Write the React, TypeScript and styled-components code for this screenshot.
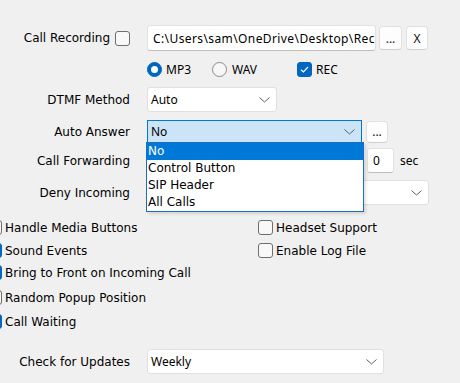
import React from 'react';
import styled, { createGlobalStyle } from 'styled-components';

const Global = createGlobalStyle`
  html, body { margin: 0; padding: 0; background: #f0f0f0; }
  body { font-family: "DejaVu Sans", sans-serif; }
`;

const Page = styled.div`
  width: 460px;
  height: 383px;
  overflow: hidden;
  box-sizing: border-box;
  padding-top: 25px;
  background: #f0f0f0;
  color: #000;
  display: flex;
  flex-direction: column;
`;

const Row = styled.div<{ $h: number; $mt?: number }>`
  display: grid;
  grid-template-columns: 130px 1fr;
  column-gap: 17px;
  height: ${(p) => p.$h}px;
  margin-top: ${(p) => p.$mt ?? 0}px;
  align-items: center;
  flex-shrink: 0;
`;

const Label = styled.div`
  display: flex;
  justify-content: flex-end;
  align-items: center;
  gap: 5px;
  font-family: "DejaVu Sans", sans-serif;
  font-size: 12px;
  white-space: nowrap;
`;

const Controls = styled.div`
  display: flex;
  align-items: center;
  height: 100%;
  position: relative;
  font-family: "Noto Sans", sans-serif;
  font-size: 12px;
`;

const TextBox = styled.div<{ $w: number; $ml?: number; $spacing?: number }>`
  width: ${(p) => p.$w}px;
  height: 100%;
  margin-left: ${(p) => p.$ml ?? 0}px;
  box-sizing: border-box;
  background: #fff;
  border: 1px solid #e2e2e2;
  border-bottom-color: #bdbdbd;
  border-radius: 3px;
  display: flex;
  align-items: center;
  padding-left: 5px;
  overflow: hidden;
  white-space: nowrap;
  font-family: "Noto Sans", sans-serif;
  font-size: 12px;
  letter-spacing: ${(p) => p.$spacing ?? 0}px;
  flex-shrink: 0;
`;

const SmallButton = styled.div<{ $w: number; $h: number; $ml: number }>`
  width: ${(p) => p.$w}px;
  height: ${(p) => p.$h}px;
  margin-left: ${(p) => p.$ml}px;
  box-sizing: border-box;
  background: #fdfdfd;
  border: 1px solid #e0e0e0;
  border-bottom-color: #cfcfcf;
  border-radius: 4px;
  display: flex;
  align-items: center;
  justify-content: center;
  font-family: "Noto Sans", sans-serif;
  font-size: 12px;
  color: #111;
  flex-shrink: 0;
`;

const Option = styled.div<{ $w?: number }>`
  display: flex;
  align-items: center;
  gap: 4px;
  ${(p) => (p.$w ? `width: ${p.$w}px;` : '')}
  flex-shrink: 0;
`;

const RadioDot = styled.span<{ $on?: boolean }>`
  width: 15px;
  height: 15px;
  box-sizing: border-box;
  border-radius: 50%;
  flex-shrink: 0;
  display: flex;
  align-items: center;
  justify-content: center;
  background: ${(p) => (p.$on ? '#0067c0' : '#f7f7f7')};
  border: 1px solid ${(p) => (p.$on ? '#0067c0' : '#8a8a8a')};
  &::after {
    content: '';
    display: ${(p) => (p.$on ? 'block' : 'none')};
    width: 7px;
    height: 7px;
    border-radius: 50%;
    background: #fff;
  }
`;

const OptionText = styled.span<{ $ml?: number }>`
  margin-left: ${(p) => p.$ml ?? 0}px;
`;

const CheckBox = styled.span<{ $on?: boolean }>`
  width: 15px;
  height: 15px;
  box-sizing: border-box;
  border-radius: 3px;
  flex-shrink: 0;
  display: flex;
  align-items: center;
  justify-content: center;
  background: ${(p) => (p.$on ? '#0067c0' : '#f8f8f8')};
  border: 1px solid ${(p) => (p.$on ? '#0067c0' : '#6e6e6e')};
`;

const Check: React.FC<{ on?: boolean }> = ({ on }) => (
  <CheckBox $on={on}>
    {on && (
      <svg width="11" height="11" viewBox="0 0 11 11">
        <polyline points="2,5.8 4.4,8 9,3" fill="none" stroke="#fff" strokeWidth="1.2" />
      </svg>
    )}
  </CheckBox>
);

const SelectBox = styled.div<{ $w: number; $active?: boolean }>`
  width: ${(p) => p.$w}px;
  height: 100%;
  box-sizing: border-box;
  background: ${(p) => (p.$active ? '#cce4f7' : '#fff')};
  border: 1px solid ${(p) => (p.$active ? '#0078d7' : '#e0e0e0')};
  border-radius: ${(p) => (p.$active ? '0' : '3px')};
  display: flex;
  align-items: center;
  justify-content: space-between;
  padding: 0 6px 0 3px;
  font-family: "Noto Sans", sans-serif;
  font-size: 12px;
  position: relative;
  flex-shrink: 0;
`;

const Chevron = () => (
  <svg width="11" height="6" viewBox="0 0 11 6">
    <polyline points="0.5,0.5 5.5,5 10.5,0.5" fill="none" stroke="#606060" strokeWidth="1" />
  </svg>
);

const Select: React.FC<{ w: number; value?: string; active?: boolean; children?: React.ReactNode }> = ({
  w,
  value,
  active,
  children,
}) => (
  <SelectBox $w={w} $active={active}>
    <span>{value}</span>
    <Chevron />
    {children}
  </SelectBox>
);

const ListBox = styled.div`
  position: absolute;
  top: 100%;
  left: -2px;
  width: 218px;
  box-sizing: border-box;
  border: 1px solid #1a6fc4;
  background: #fff;
  z-index: 10;
  box-shadow: 2px 2px 3px rgba(0, 0, 0, 0.12);
  font-family: "DejaVu Sans", sans-serif;
  font-size: 12px;
`;

const ListItem = styled.div<{ $sel?: boolean }>`
  height: 17px;
  line-height: 17px;
  padding-left: 1px;
  background: ${(p) => (p.$sel ? '#0078d7' : 'transparent')};
  color: ${(p) => (p.$sel ? '#fff' : '#000')};
  white-space: nowrap;
`;

const Unit = styled.span`
  margin-left: 6px;
`;

const CheckArea = styled.div`
  display: grid;
  grid-template-columns: 271px 1fr;
  margin-left: -13px;
  margin-top: 15px;
  flex-shrink: 0;
`;

const CheckColumn = styled.div`
  display: flex;
  flex-direction: column;
`;

const CheckItem = styled.div<{ $mt?: number }>`
  display: flex;
  align-items: center;
  gap: 3px;
  height: 15px;
  margin-top: ${(p) => p.$mt ?? 0}px;
  font-family: "DejaVu Sans", sans-serif;
  font-size: 12px;
  white-space: nowrap;
`;

export default function App() {
  return (
    <>
      <Global />
      <Page>
        <Row $h={26}>
          <Label>
            Call Recording
            <Check />
          </Label>
          <Controls>
            <TextBox $w={229} $spacing={0.4}>
              C:\Users\sam\OneDrive\Desktop\Recordings
            </TextBox>
            <SmallButton $w={23} $h={24} $ml={3}>
              ...
            </SmallButton>
            <SmallButton $w={22} $h={24} $ml={4}>
              X
            </SmallButton>
          </Controls>
        </Row>

        <Row $h={16} $mt={10}>
          <div />
          <Controls>
            <Option $w={65}>
              <RadioDot $on />
              MP3
            </Option>
            <Option $w={85}>
              <RadioDot />
              <OptionText $ml={1}>WAV</OptionText>
            </Option>
            <Option>
              <Check on />
              REC
            </Option>
          </Controls>
        </Row>

        <Row $h={25} $mt={10}>
          <Label>DTMF Method</Label>
          <Controls>
            <Select w={130} value="Auto" />
          </Controls>
        </Row>

        <Row $h={23} $mt={8}>
          <Label>Auto Answer</Label>
          <Controls>
            <Select w={215} value="No" active>
              <ListBox>
                <ListItem $sel>No</ListItem>
                <ListItem>Control Button</ListItem>
                <ListItem>SIP Header</ListItem>
                <ListItem>All Calls</ListItem>
              </ListBox>
            </Select>
            <SmallButton $w={22} $h={22} $ml={4}>
              ...
            </SmallButton>
          </Controls>
        </Row>

        <Row $h={25} $mt={5}>
          <Label>Call Forwarding</Label>
          <Controls>
            <Select w={215} value="" />
            <TextBox $w={27} $ml={5}>
              0
            </TextBox>
            <Unit>sec</Unit>
          </Controls>
        </Row>

        <Row $h={25} $mt={7}>
          <Label>Deny Incoming</Label>
          <Controls>
            <Select w={282} value="" />
          </Controls>
        </Row>

        <CheckArea>
          <CheckColumn>
            <CheckItem>
              <Check />
              Handle Media Buttons
            </CheckItem>
            <CheckItem $mt={8}>
              <Check on />
              Sound Events
            </CheckItem>
            <CheckItem $mt={7}>
              <Check on />
              Bring to Front on Incoming Call
            </CheckItem>
            <CheckItem $mt={10}>
              <Check />
              Random Popup Position
            </CheckItem>
            <CheckItem $mt={9}>
              <Check on />
              Call Waiting
            </CheckItem>
          </CheckColumn>
          <CheckColumn>
            <CheckItem>
              <Check />
              Headset Support
            </CheckItem>
            <CheckItem $mt={8}>
              <Check />
              Enable Log File
            </CheckItem>
          </CheckColumn>
        </CheckArea>

        <Row $h={25} $mt={20}>
          <Label>Check for Updates</Label>
          <Controls>
            <Select w={237} value="Weekly" />
          </Controls>
        </Row>
      </Page>
    </>
  );
}
